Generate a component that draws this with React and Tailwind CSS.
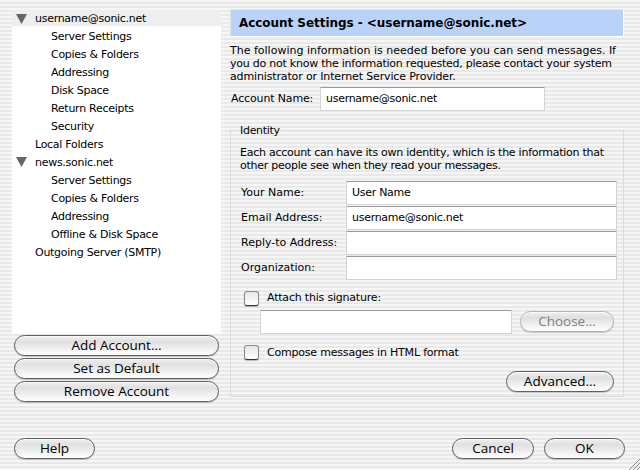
import React from 'react';

const treeRows = [
  { label: 'username@sonic.net', level: 0, open: true, selected: true },
  { label: 'Server Settings', level: 1 },
  { label: 'Copies & Folders', level: 1 },
  { label: 'Addressing', level: 1 },
  { label: 'Disk Space', level: 1 },
  { label: 'Return Receipts', level: 1 },
  { label: 'Security', level: 1 },
  { label: 'Local Folders', level: 0 },
  { label: 'news.sonic.net', level: 0, open: true },
  { label: 'Server Settings', level: 1 },
  { label: 'Copies & Folders', level: 1 },
  { label: 'Addressing', level: 1 },
  { label: 'Offline & Disk Space', level: 1 },
  { label: 'Outgoing Server (SMTP)', level: 0 },
];

const identityRows = [
  { label: 'Your Name:', value: 'User Name' },
  { label: 'Email Address:', value: 'username@sonic.net' },
  { label: 'Reply-to Address:', value: '' },
  { label: 'Organization:', value: '' },
];

// Aqua pill button
const AquaButton = ({ children, className = '', disabled }) => (
  <button
    className={`flex h-[21px] items-center justify-center rounded-full border bg-gradient-to-b from-[#efefef] via-[#e0e0e0] via-30% to-[#ffffff] font-['Open_Sans','DejaVu_Sans',sans-serif] text-[13.5px] leading-none shadow-[0_1px_1px_rgba(0,0,0,0.2),inset_0_1px_1px_rgba(255,255,255,0.8)] ${
      disabled ? 'border-[#b4b4b4] text-[#808080]' : 'border-[#5f5f5f] text-black'
    } ${className}`}
  >
    {children}
  </button>
);

const Field = ({ value, className = '' }) => (
  <div
    className={`flex items-center border border-[#d4d4d4] border-t-[#9a9a9a] bg-white pl-[5px] tracking-[-0.28px] ${className}`}
  >
    {value}
  </div>
);

const Checkbox = () => (
  <div className="h-[15px] w-[15px] shrink-0 rounded-[3px] border border-[#8a8a8a] border-b-[#333333] bg-gradient-to-b from-[#e6e6e6] to-[#ffffff] shadow-[0_1px_1px_rgba(0,0,0,0.25)]" />
);

const Triangle = () => (
  <svg width="11" height="10" viewBox="0 0 11 10" className="absolute left-[4px] top-[4px]">
    <path d="M0 0H11L5.5 10Z" fill="#666666" />
  </svg>
);

export default function App() {
  return (
    <div className="relative flex h-[470px] w-[640px] flex-col overflow-hidden bg-[repeating-linear-gradient(180deg,#f6f6f6_0px,#f6f6f6_2px,#e9e9e9_2px,#e9e9e9_4px)] font-['DejaVu_Sans',sans-serif] text-[11px] text-black">
      <div className="flex pt-[9px]">
        {/* Account tree and its buttons */}
        <div className="ml-[12px] w-[209px]">
          <div className="mt-[1px] h-[324px] bg-white tracking-[-0.28px]">
            {treeRows.map((row, i) => (
              <div
                key={i}
                className={`relative flex items-center pt-[2px] ${row.level ? 'pl-[39px]' : 'pl-[23px]'} ${
                  row.selected ? 'mb-[1px] h-[16px] bg-[#eeeeee]' : 'h-[18px]'
                }`}
              >
                {row.open && <Triangle />}
                {row.label}
              </div>
            ))}
          </div>
          <div className="mt-[1px] flex flex-col gap-[2px] px-[2px]">
            <AquaButton className="w-[205px]">Add Account...</AquaButton>
            <AquaButton className="w-[205px]">Set as Default</AquaButton>
            <AquaButton className="w-[205px]">Remove Account</AquaButton>
          </div>
        </div>

        {/* Account settings panel */}
        <div className="ml-[9px] w-[396px]">
          <div className="flex h-[28px] w-[394px] items-center border border-[#e4e4e4] border-b-white border-r-white bg-[#b9d3f8] pl-[8px] text-[12px] font-bold tracking-[-0.05px]">
            Account Settings - &lt;username@sonic.net&gt;
          </div>
          <div className="mt-[7px] whitespace-nowrap leading-[13px]">
            <p>The following information is needed before you can send messages. If</p>
            <p className="tracking-[-0.24px]">you do not know the information requested, please contact your system</p>
            <p className="tracking-[-0.14px]">administrator or Internet Service Provider.</p>
          </div>
          <div className="mt-[4px] flex items-center">
            <span className="ml-[1px] w-[89px] tracking-[-0.15px]">Account Name:</span>
            <Field value="username@sonic.net" className="h-[24px] w-[225px]" />
          </div>

          <fieldset className="mt-[13px] h-[273px] w-[394px] border border-[#dcdcdc] pl-[9px]">
            <legend className="ml-[-1px] px-[1px] leading-[13px] tracking-[-0.3px]">Identity</legend>
            <div className="mt-[9px] whitespace-nowrap leading-[13px] tracking-[-0.26px]">
              <p>Each account can have its own identity, which is the information that</p>
              <p>other people see when they read your messages.</p>
            </div>
            <div className="mt-[9px]">
              {identityRows.map((row) => (
                <div key={row.label} className="mb-[1px] flex h-[24px] items-center">
                  <span className="ml-[1px] w-[105px] shrink-0">{row.label}</span>
                  <Field value={row.value} className="h-full w-[271px]" />
                </div>
              ))}
            </div>
            <div className="ml-[4px] mt-[10px] flex items-center gap-[8px]">
              <Checkbox />
              <span className="tracking-[-0.2px]">Attach this signature:</span>
            </div>
            <div className="mt-[3px] flex items-center">
              <Field value="" className="ml-[20px] h-[24px] w-[252px]" />
              <AquaButton disabled className="ml-[8px] w-[94px]">
                Choose...
              </AquaButton>
            </div>
            <div className="ml-[4px] mt-[11px] flex items-center gap-[8px]">
              <Checkbox />
              <span className="tracking-[-0.2px]">Compose messages in HTML format</span>
            </div>
            <div className="mt-[10px] flex justify-end pr-[9px]">
              <AquaButton className="w-[108px]">Advanced...</AquaButton>
            </div>
          </fieldset>
        </div>
      </div>

      {/* Dialog buttons */}
      <div className="mt-auto mb-[11px] flex items-center pl-[14px] pr-[15px]">
        <AquaButton className="w-[81px]">Help</AquaButton>
        <AquaButton className="ml-auto w-[82px]">Cancel</AquaButton>
        <AquaButton className="ml-[10px] w-[81px]">OK</AquaButton>
      </div>

      {/* Resize grip */}
      <svg width="12" height="12" viewBox="0 0 12 12" className="absolute bottom-0 right-0">
        <path d="M1 12L12 1M5 12L12 5M9 12L12 9" stroke="#8a8a8a" strokeWidth="1" fill="none" />
      </svg>
    </div>
  );
}
